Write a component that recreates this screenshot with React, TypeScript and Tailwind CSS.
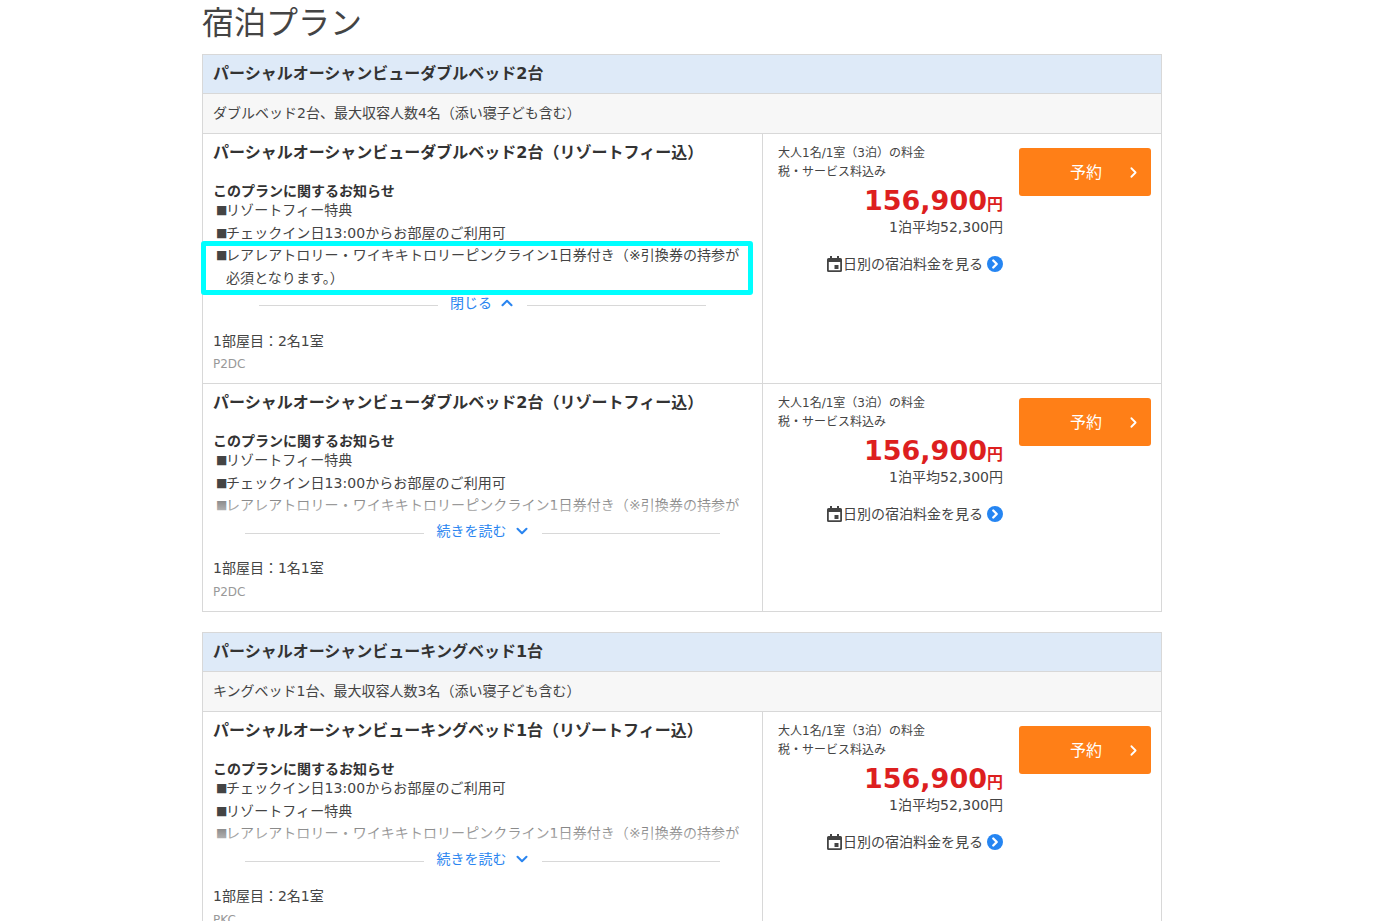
import { ChevronDown, ChevronRight, ChevronUp } from 'lucide-react';

const FONT = "font-['DejaVu_Sans','Noto_Sans_CJK_JP',sans-serif]";

interface Plan {
  title: string;
  notices: string[];
  room: string;
  code: string;
  expanded?: boolean;
}

interface Group {
  name: string;
  description: string;
  plans: Plan[];
}

const RAINBOW = 'レアレアトロリー・ワイキキトロリーピンクライン1日券付き（※引換券の持参が必須となります。）';

const groups: Group[] = [
  {
    name: 'パーシャルオーシャンビューダブルベッド2台',
    description: 'ダブルベッド2台、最大収容人数4名（添い寝子ども含む）',
    plans: [
      {
        title: 'パーシャルオーシャンビューダブルベッド2台（リゾートフィー込）',
        notices: ['リゾートフィー特典', 'チェックイン日13:00からお部屋のご利用可', RAINBOW],
        room: '1部屋目：2名1室',
        code: 'P2DC',
        expanded: true,
      },
      {
        title: 'パーシャルオーシャンビューダブルベッド2台（リゾートフィー込）',
        notices: ['リゾートフィー特典', 'チェックイン日13:00からお部屋のご利用可', RAINBOW],
        room: '1部屋目：1名1室',
        code: 'P2DC',
      },
    ],
  },
  {
    name: 'パーシャルオーシャンビューキングベッド1台',
    description: 'キングベッド1台、最大収容人数3名（添い寝子ども含む）',
    plans: [
      {
        title: 'パーシャルオーシャンビューキングベッド1台（リゾートフィー込）',
        notices: ['チェックイン日13:00からお部屋のご利用可', 'リゾートフィー特典', RAINBOW],
        room: '1部屋目：2名1室',
        code: 'PKC',
      },
    ],
  },
];

const CalendarIcon = () => (
  <svg width="15" height="16" viewBox="0 0 15 16" className="mr-[1px] shrink-0">
    <path
      fill="#444"
      d="M3 0h2v2h5V0h2v2h1.500A1.500 1.500 0 0 1 15 3.500v11a1.500 1.500 0 0 1-1.500 1.500h-12A1.500 1.500 0 0 1 0 14.500v-11A1.500 1.500 0 0 1 1.500 2H3zM1.800 6v8.200h11.400V6z"
    />
    <rect x="7.500" y="9" width="4" height="4" fill="#444" />
  </svg>
);

const Toggle = ({ expanded }: { expanded?: boolean }) => (
  <div className={`flex h-[20px] items-center justify-center ${expanded ? 'px-[46px]' : 'px-[32px]'}`}>
    <div className="h-px flex-1 bg-[#d8d8d8]" />
    <div className={`flex items-center pb-[4px] pr-[11px] text-[14px] text-[#2a85f0] ${expanded ? 'pl-[12px]' : 'pl-[13px]'}`}>
      {expanded ? '閉じる' : '続きを読む'}
      {expanded ? (
        <ChevronUp size={18} strokeWidth={2.75} className="ml-[6px]" />
      ) : (
        <ChevronDown size={18} strokeWidth={2.75} className="ml-[6px]" />
      )}
    </div>
    <div className="h-px flex-1 bg-[#d8d8d8]" />
  </div>
);

const PlanRow = ({ plan, last }: { plan: Plan; last: boolean }) => (
  <div className={`flex ${last ? '' : 'border-b border-[#d8d8d8]'}`}>
    <div className="relative w-[560px] shrink-0 border-r border-[#d8d8d8] px-[10px] pt-[7px]">
      <h3 className="text-[16px] font-bold leading-[24px] text-[#333]">{plan.title}</h3>
      <div className="mt-[16px] text-[14px] font-bold leading-[20px] text-[#333]">このプランに関するお知らせ</div>
      <div
        className={`relative -mt-[2px] overflow-hidden text-[14px] leading-[22.500px] tracking-[0.07px] text-[#444] ${plan.expanded ? '' : 'h-[67px]'}`}
      >
        {plan.notices.map((n) => (
          <div key={n} className="flex">
            <span className="w-[13px] shrink-0 pl-[3px] text-center text-[12px]">■</span>
            <span className="w-[514px]">{n}</span>
          </div>
        ))}
        {!plan.expanded && (
          <div className="absolute inset-x-0 bottom-0 h-[24px] bg-gradient-to-b from-white/20 to-white/70" />
        )}
      </div>
      <div className={plan.expanded ? 'mt-[6px]' : 'mt-[7px]'}>
        <Toggle expanded={plan.expanded} />
      </div>
      <div className={`text-[14px] leading-[22px] text-[#444] ${plan.expanded ? 'mt-[15px]' : 'mt-[14px]'}`}>{plan.room}</div>
      <div className={`text-[12px] leading-[20px] text-[#999] ${plan.expanded ? 'mt-[2px] pb-[9px]' : 'mt-[3px] pb-[9px]'}`}>
        {plan.code}
      </div>
      {plan.expanded && (
        <div className="absolute left-[-2px] top-[107px] h-[54px] w-[552px] rounded-[3px] border-[5px] border-[#00ffff]" />
      )}
    </div>
    <div className="flex flex-1 justify-between pl-[15px] pr-[10px] pt-[10px]">
      <div className="w-[225px] text-[12px] leading-[19px] text-[#444]">
        <div>大人1名/1室（3泊）の料金</div>
        <div>税・サービス料込み</div>
        <div className="mt-[8px] text-right font-bold leading-[22px] text-[#dd1f1f]">
          <span className="text-[27px]">156,900</span>
          <span className="text-[16px]">円</span>
        </div>
        <div className="text-right text-[14px] leading-[20px]">1泊平均52,300円</div>
        <div className="mt-[17px] flex items-center justify-end text-[14px] leading-[20px]">
          <CalendarIcon />
          <span>日別の宿泊料金を見る</span>
          <span className="ml-[4px] flex h-[16px] w-[16px] items-center justify-center rounded-full bg-[#2585f2] text-white">
            <ChevronRight size={14} strokeWidth={4} />
          </span>
        </div>
      </div>
      <button className="relative mt-[4px] h-[48px] w-[132px] rounded-[3px] bg-[#ff7f17] pl-[2px] pt-[2px] text-[16px] text-white">
        予約
        <ChevronRight size={17} strokeWidth={2.5} className="absolute right-[9px] top-[16px]" />
      </button>
    </div>
  </div>
);

const App = () => (
  <div className={`h-screen overflow-hidden bg-white ${FONT}`}>
    <div className="mx-auto w-[960px] -translate-x-[9px]">
      <h1 className="h-[54px] text-[32px] font-normal leading-[47px] text-[#444]">宿泊プラン</h1>
      <div className="flex flex-col gap-[20px]">
        {groups.map((group) => (
          <section key={group.name} className="border border-[#d8d8d8]">
            <h2 className="h-[39px] border-b border-[#d8d8d8] bg-[#deeaf8] px-[10px] text-[16px] font-bold leading-[38px] text-[#333]">
              {group.name}
            </h2>
            <div className="h-[40px] border-b border-[#d8d8d8] bg-[#f7f7f7] px-[10px] text-[14px] leading-[39px] text-[#444]">
              {group.description}
            </div>
            {group.plans.map((plan, i) => (
              <PlanRow key={i} plan={plan} last={i === group.plans.length - 1} />
            ))}
          </section>
        ))}
      </div>
    </div>
  </div>
);

export default App;
